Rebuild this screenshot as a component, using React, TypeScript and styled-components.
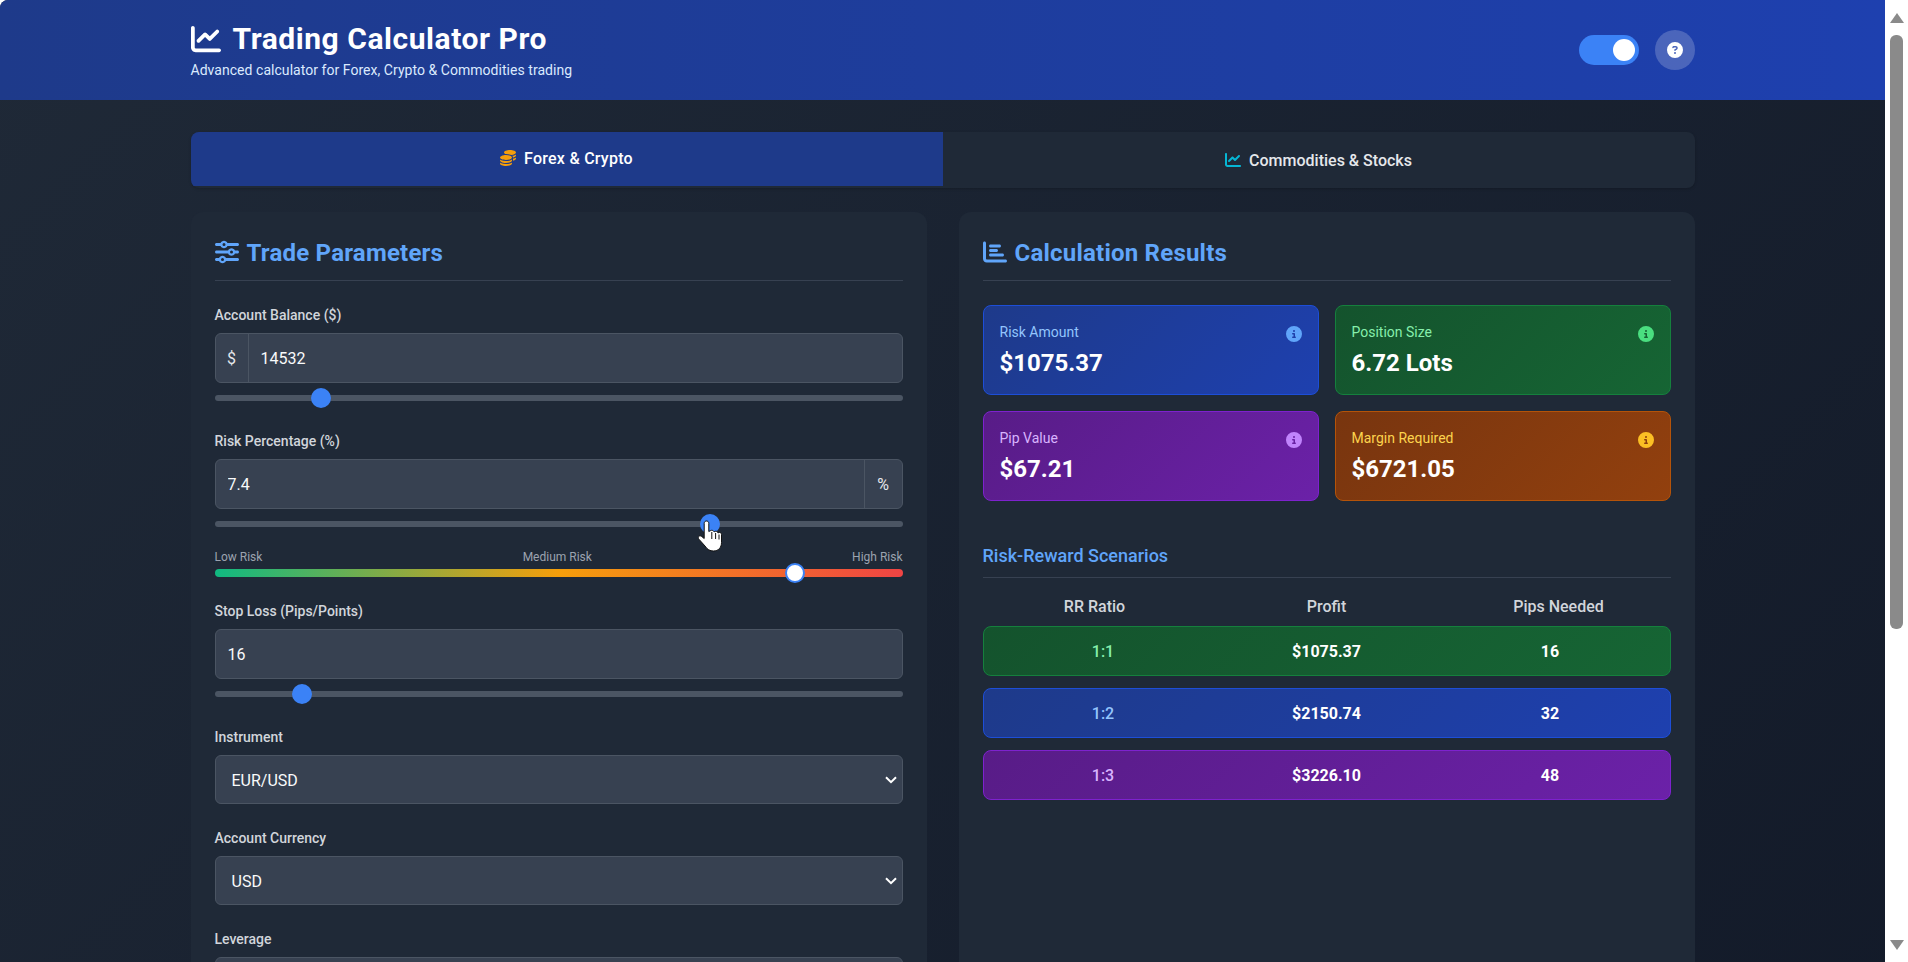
import React from 'react';
import styled, {createGlobalStyle} from 'styled-components';
import {FaChartLine, FaCoins, FaSliders, FaChartBar, FaCircleInfo, FaCircleQuestion} from 'react-icons/fa6';

const COLORS = {
    panel: '#1f2937',
    field: '#374151',
    line: '#4b5563',
    blue: '#3b82f6',
    sky: '#60a5fa',
    label: '#d1d5db',
    muted: '#9ca3af',
};

const TONES = {
    blue: {from: '#1e3a8a', to: '#1e40af', border: '#1d4ed8', label: '#93c5fd', icon: '#60a5fa'},
    green: {from: '#14532d', to: '#166534', border: '#15803d', label: '#86efac', icon: '#4ade80'},
    purple: {from: '#581c87', to: '#6b21a8', border: '#7e22ce', label: '#d8b4fe', icon: '#c084fc'},
    orange: {from: '#78350f', to: '#92400e', border: '#b45309', label: '#fcd34d', icon: '#fbbf24'},
};

type Tone = keyof typeof TONES;

const RESULTS: {tone: Tone; label: string; value: string}[] = [
    {tone: 'blue', label: 'Risk Amount', value: '$1075.37'},
    {tone: 'green', label: 'Position Size', value: '6.72 Lots'},
    {tone: 'purple', label: 'Pip Value', value: '$67.21'},
    {tone: 'orange', label: 'Margin Required', value: '$6721.05'},
];

const SCENARIOS: {tone: Tone; ratio: string; profit: string; pips: string}[] = [
    {tone: 'green', ratio: '1:1', profit: '$1075.37', pips: '16'},
    {tone: 'blue', ratio: '1:2', profit: '$2150.74', pips: '32'},
    {tone: 'purple', ratio: '1:3', profit: '$3226.10', pips: '48'},
];

const CHEVRON = `url("data:image/svg+xml,%3Csvg xmlns='http://www.w3.org/2000/svg' width='12' height='8' viewBox='0 0 12 8'%3E%3Cpath d='M1 1.2 6 6.2l5-5' fill='none' stroke='%23fff' stroke-width='2'/%3E%3C/svg%3E")`;

const HandCursor = () => (
    <svg width="24" height="32" viewBox="0 0 24 32">
        <path
            d="M8.5 1C7.2 1 6.2 2 6.2 3.3V18.5L3.6 16.4C2.6 15.6 1.2 15.7.6 16.6.1 17.4.2 18.4.9 19.2L7 26C9.2 29.6 12 31 15.5 31 20.5 31 23.5 27.5 23.5 22.5V14.5C23.5 13.3 22.6 12.4 21.5 12.4 20.9 12.4 20.3 12.7 20 13.1 19.8 12 18.9 11.2 17.8 11.2 17.1 11.2 16.5 11.5 16.1 12 15.8 11 14.9 10.3 13.9 10.3 13.2 10.3 12.6 10.6 10.8 11.5V3.3C10.8 2 9.8 1 8.5 1Z"
            fill="#fff"
            stroke="#111"
            strokeWidth="1"
        />
        <path d="M13.8 12v7M17.6 13v6M21 14.5v5" stroke="#111" strokeWidth="1" fill="none"/>
    </svg>
);

const App = () => {
    return (
        <Frame>
            <GlobalStyle/>
            <Page>
                <Header>
                    <HeaderInner>
                        <div>
                            <Title><FaChartLine size={30}/>Trading Calculator Pro</Title>
                            <Subtitle>Advanced calculator for Forex, Crypto &amp; Commodities trading</Subtitle>
                        </div>
                        <HeaderActions>
                            <Toggle/>
                            <HelpButton><FaCircleQuestion size={16}/></HelpButton>
                        </HeaderActions>
                    </HeaderInner>
                </Header>

                <Content>
                    <Tabs>
                        <Tab $active><FaCoins size={16} color="#f59e0b"/>Forex &amp; Crypto</Tab>
                        <Tab><FaChartLine size={16} color="#06b6d4"/>Commodities &amp; Stocks</Tab>
                    </Tabs>

                    <Columns>
                        <Panel>
                            <PanelTitle><FaSliders size={24}/><span>Trade Parameters</span></PanelTitle>

                            <Field>
                                <Label>Account Balance ($)</Label>
                                <InputGroup>
                                    <Addon $side="left">$</Addon>
                                    <TextInput type="number" value="14532" readOnly/>
                                </InputGroup>
                                <Slider type="range" min={100} max={100000} value={14532} readOnly/>
                            </Field>

                            <Field>
                                <Label>Risk Percentage (%)</Label>
                                <InputGroup>
                                    <TextInput type="number" value="7.4" readOnly/>
                                    <Addon $side="right">%</Addon>
                                </InputGroup>
                                <SliderWrap>
                                    <Slider type="range" min={0.5} max={10} step={0.1} value={7.4} readOnly/>
                                    <CursorSpot><HandCursor/></CursorSpot>
                                </SliderWrap>
                                <RiskLabels>
                                    <span>Low Risk</span>
                                    <span>Medium Risk</span>
                                    <span>High Risk</span>
                                </RiskLabels>
                                <RiskBar>
                                    <RiskMarker $pos={84.4}/>
                                </RiskBar>
                            </Field>

                            <Field>
                                <Label>Stop Loss (Pips/Points)</Label>
                                <InputGroup>
                                    <TextInput type="number" value="16" readOnly/>
                                </InputGroup>
                                <Slider type="range" min={5} max={100} value={16} readOnly/>
                            </Field>

                            <Field>
                                <Label>Instrument</Label>
                                <Select defaultValue="EUR/USD">
                                    <option>EUR/USD</option>
                                    <option>GBP/USD</option>
                                </Select>
                            </Field>

                            <Field>
                                <Label>Account Currency</Label>
                                <Select defaultValue="USD">
                                    <option>USD</option>
                                    <option>EUR</option>
                                </Select>
                            </Field>

                            <Field>
                                <Label>Leverage</Label>
                                <Select defaultValue="1:100">
                                    <option>1:100</option>
                                    <option>1:50</option>
                                </Select>
                            </Field>
                        </Panel>

                        <Panel>
                            <PanelTitle><FaChartBar size={24}/><span>Calculation Results</span></PanelTitle>

                            <ResultGrid>
                                {RESULTS.map(item => (
                                    <ResultCard key={item.label} $tone={item.tone}>
                                        <ResultHead>
                                            <ResultLabel $tone={item.tone}>{item.label}</ResultLabel>
                                            <FaCircleInfo size={16} color={TONES[item.tone].icon}/>
                                        </ResultHead>
                                        <ResultValue>{item.value}</ResultValue>
                                    </ResultCard>
                                ))}
                            </ResultGrid>

                            <SubTitle>Risk-Reward Scenarios</SubTitle>

                            <TableHead>
                                <span>RR Ratio</span>
                                <span>Profit</span>
                                <span>Pips Needed</span>
                            </TableHead>
                            <TableRows>
                                {SCENARIOS.map(row => (
                                    <TableRow key={row.ratio} $tone={row.tone}>
                                        <RatioCell $tone={row.tone}>{row.ratio}</RatioCell>
                                        <span>{row.profit}</span>
                                        <span>{row.pips}</span>
                                    </TableRow>
                                ))}
                            </TableRows>
                        </Panel>
                    </Columns>
                </Content>
            </Page>

            <ScrollRail>
                <ArrowUp/>
                <ThumbTrack><Thumb/></ThumbTrack>
                <ArrowDown/>
            </ScrollRail>
        </Frame>
    );
};

export default App;


const GlobalStyle = createGlobalStyle`
    * {
        box-sizing: border-box;
    }
    html, body {
        margin: 0;
        height: 100%;
        overflow: hidden;
        background: #fff;
        font-family: Roboto, "Open Sans", sans-serif;
    }
`;

const Frame = styled.div`
    display: flex;
    height: 100vh;
    overflow: hidden;
    background: #fff;
`;

const Page = styled.div`
    flex: 1;
    min-width: 0;
    overflow: hidden;
    border-top-left-radius: 8px;
    background: linear-gradient(135deg, #1f2937, #111827) 0 0 / 100% 1500px no-repeat;
`;

const Header = styled.header`
    height: 100px;
    background: linear-gradient(90deg, #1e3a8a, #1e40af);
    color: #fff;
`;

const HeaderInner = styled.div`
    width: 1504px;
    height: 100%;
    margin: 0 auto;
    display: flex;
    align-items: center;
    justify-content: space-between;
`;

const Title = styled.h1`
    display: flex;
    align-items: center;
    gap: 12px;
    margin: 0;
    font-size: 30px;
    line-height: 36px;
    font-weight: 700;
    letter-spacing: 0.55px;
`;

const Subtitle = styled.p`
    margin: 3px 0 0;
    font-size: 14px;
    line-height: 20px;
    letter-spacing: 0.04px;
    color: #dbeafe;
`;

const HeaderActions = styled.div`
    display: flex;
    align-items: center;
    gap: 16px;
`;

const Toggle = styled.div`
    position: relative;
    width: 60px;
    height: 30px;
    border-radius: 15px;
    background: ${COLORS.blue};

    &::after {
        content: '';
        position: absolute;
        top: 4px;
        right: 4px;
        width: 22px;
        height: 22px;
        border-radius: 50%;
        background: #fff;
    }
`;

const HelpButton = styled.div`
    width: 40px;
    height: 40px;
    display: flex;
    align-items: center;
    justify-content: center;
    border-radius: 50%;
    background: rgba(255, 255, 255, 0.2);
`;

const Content = styled.main`
    width: 1504px;
    margin: 0 auto;
    padding-top: 32px;
`;

const Tabs = styled.div`
    display: grid;
    grid-template-columns: 1fr 1fr;
    height: 56px;
    margin-bottom: 24px;
    overflow: hidden;
    border-radius: 8px;
    background: ${COLORS.panel};
    box-shadow: 0 1px 3px rgba(0, 0, 0, 0.2);
`;

const Tab = styled.div<{$active?: boolean}>`
    display: flex;
    align-items: center;
    justify-content: center;
    gap: 8px;
    font-size: 16px;
    font-weight: 500;
    letter-spacing: ${p => (p.$active ? '0.25px' : '0')};
    color: ${p => (p.$active ? '#fff' : '#e5e7eb')};
    background: ${p => (p.$active ? '#1e3a8a' : 'transparent')};
    transform: ${p => (p.$active ? 'translateY(-2px)' : 'none')};
`;

const Columns = styled.div`
    display: grid;
    grid-template-columns: 1fr 1fr;
    gap: 32px;
    align-items: stretch;
`;

const Panel = styled.section`
    padding: 24px;
    border-radius: 12px;
    background: ${COLORS.panel};
`;

const PanelTitle = styled.h2`
    display: flex;
    align-items: center;
    gap: 8px;
    margin: 0 0 24px;
    padding-bottom: 12px;
    border-bottom: 1px solid ${COLORS.field};
    font-size: 24px;
    line-height: 32px;
    font-weight: 700;
    letter-spacing: 0.22px;
    color: ${COLORS.sky};

    span {
        padding-top: 3px;
        line-height: 29px;
    }
`;

const Field = styled.div`
    display: flow-root;
    margin-bottom: 24px;
`;

const Label = styled.label`
    display: block;
    margin-bottom: 8px;
    font-size: 14px;
    line-height: 20px;
    font-weight: 500;
    color: ${COLORS.label};
`;

const InputGroup = styled.div`
    display: flex;
    height: 50px;
    overflow: hidden;
    border: 1px solid ${COLORS.line};
    border-radius: 6px;
    background: ${COLORS.field};
`;

const Addon = styled.span<{$side: 'left' | 'right'}>`
    flex: 0 0 ${p => (p.$side === 'left' ? '33px' : '38px')};
    display: flex;
    align-items: center;
    justify-content: center;
    font-size: 16px;
    color: #e5e7eb;
    border-${p => (p.$side === 'left' ? 'right' : 'left')}: 1px solid ${COLORS.line};
`;

const TextInput = styled.input`
    flex: 1;
    min-width: 0;
    padding: 0 12px;
    border: 0;
    outline: 0;
    background: transparent;
    font: inherit;
    font-size: 16px;
    color: #f9fafb;
    appearance: textfield;
`;

const Slider = styled.input`
    display: block;
    width: 100%;
    height: 6px;
    margin: 12px 0 6px;
    border-radius: 3px;
    background: ${COLORS.line};
    appearance: none;
    outline: 0;

    &::-webkit-slider-thumb {
        appearance: none;
        width: 20px;
        height: 20px;
        border-radius: 50%;
        background: ${COLORS.blue};
    }
`;

const SliderWrap = styled.div`
    position: relative;
    display: flow-root;
`;

const CursorSpot = styled.div`
    position: absolute;
    top: 11px;
    left: 483px;
    line-height: 0;
`;

const RiskLabels = styled.div`
    display: flex;
    justify-content: space-between;
    margin-top: 16px;
    font-size: 12px;
    line-height: 16px;
    color: ${COLORS.muted};
`;

const RiskBar = styled.div`
    position: relative;
    height: 8px;
    margin-top: 4px;
    border-radius: 4px;
    background: linear-gradient(90deg, #10b981, #f59e0b 50%, #ef4444);
`;

const RiskMarker = styled.div<{$pos: number}>`
    position: absolute;
    top: 50%;
    left: ${p => p.$pos}%;
    width: 20px;
    height: 20px;
    border: 2px solid ${COLORS.blue};
    border-radius: 50%;
    background: #fff;
    transform: translate(-50%, -50%);
`;

const Select = styled.select`
    display: block;
    width: 100%;
    height: 49px;
    padding: 1px 16px 0;
    border: 1px solid ${COLORS.line};
    border-radius: 6px;
    outline: 0;
    appearance: none;
    background: ${COLORS.field} ${CHEVRON} no-repeat right 5px center;
    font: inherit;
    font-size: 16px;
    color: #f9fafb;
`;

const ResultGrid = styled.div`
    display: grid;
    grid-template-columns: 1fr 1fr;
    gap: 16px;
    margin-bottom: 40px;
`;

const ResultCard = styled.div<{$tone: Tone}>`
    padding: 16px;
    border: 1px solid ${p => TONES[p.$tone].border};
    border-radius: 8px;
    background: linear-gradient(135deg, ${p => TONES[p.$tone].from}, ${p => TONES[p.$tone].to});

    svg {
        margin-top: 4px;
    }
`;

const ResultHead = styled.div`
    display: flex;
    align-items: flex-start;
    justify-content: space-between;
    margin-bottom: 4px;
`;

const ResultLabel = styled.span<{$tone: Tone}>`
    font-size: 14px;
    line-height: 20px;
    color: ${p => TONES[p.$tone].label};
`;

const ResultValue = styled.div`
    padding-top: 3px;
    font-size: 24px;
    line-height: 29px;
    font-weight: 700;
    color: #fff;
`;

const SubTitle = styled.h3`
    margin: 0 0 16px;
    padding: 1px 0 8px;
    border-bottom: 1px solid ${COLORS.field};
    font-size: 18px;
    line-height: 27px;
    font-weight: 500;
    color: ${COLORS.sky};
`;

const TableHead = styled.div`
    display: grid;
    grid-template-columns: 224px 240px 224px;
    margin-bottom: 8px;
    padding-top: 1px;
    font-size: 16px;
    line-height: 23px;
    font-weight: 500;
    color: ${COLORS.label};
    text-align: center;
`;

const TableRows = styled.div`
    display: flex;
    flex-direction: column;
    gap: 12px;
`;

const TableRow = styled.div<{$tone: Tone}>`
    display: grid;
    grid-template-columns: 239px 208px 239px;
    align-items: center;
    height: 50px;
    border: 1px solid ${p => TONES[p.$tone].border};
    border-radius: 8px;
    background: linear-gradient(135deg, ${p => TONES[p.$tone].from}, ${p => TONES[p.$tone].to});
    font-size: 16px;
    font-weight: 700;
    color: #fff;
    text-align: center;
`;

const RatioCell = styled.span<{$tone: Tone}>`
    font-weight: 500;
    color: ${p => TONES[p.$tone].label};
`;

const ScrollRail = styled.aside`
    flex: 0 0 23px;
    display: flex;
    flex-direction: column;
    align-items: center;
    padding: 13px 0 12px;
    background: #fff;
`;

const ArrowUp = styled.div`
    width: 0;
    height: 0;
    border-left: 7.5px solid transparent;
    border-right: 7.5px solid transparent;
    border-bottom: 10px solid #8a8a8a;
`;

const ArrowDown = styled.div`
    width: 0;
    height: 0;
    border-left: 7.5px solid transparent;
    border-right: 7.5px solid transparent;
    border-top: 10px solid #8a8a8a;
`;

const ThumbTrack = styled.div`
    flex: 1;
    padding-top: 12px;
`;

const Thumb = styled.div`
    width: 13px;
    height: 594px;
    border-radius: 6px;
    background: #8a8a8a;
`;
